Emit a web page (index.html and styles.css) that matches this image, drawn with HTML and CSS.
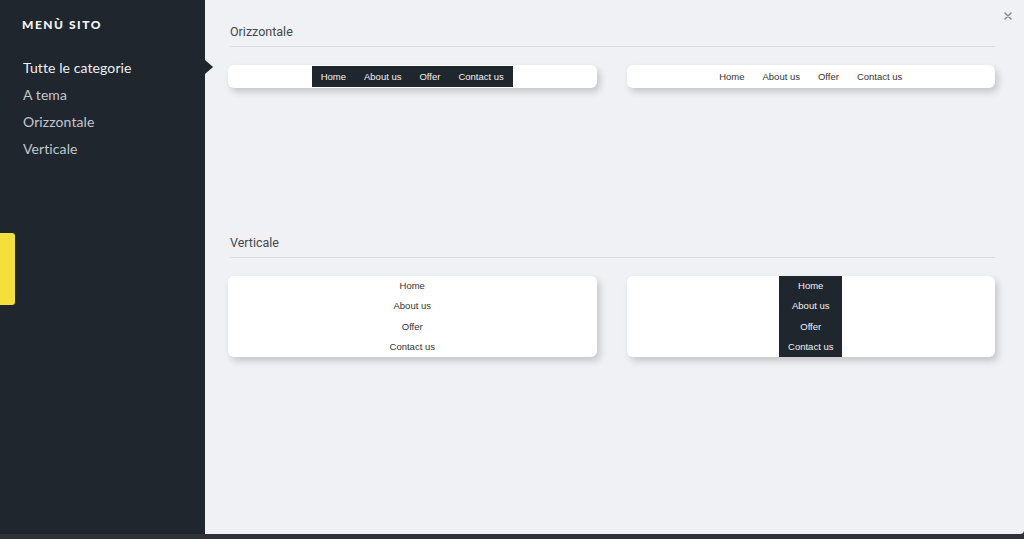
FILE: index.html
```html
<!DOCTYPE html>
<html lang="it">
<head>
    <meta charset="UTF-8">
    <meta name="viewport" content="width=device-width, initial-scale=1.0">
    <link rel="stylesheet" href="styles.css">
</head>
<body>
    <div class="app">
        <aside class="sidebar">
            <h1 class="sidebar-title">Menù sito</h1>
            <ul class="category-list">
                <li class="category-item active">Tutte le categorie</li>
                <li class="category-item">A tema</li>
                <li class="category-item">Orizzontale</li>
                <li class="category-item">Verticale</li>
            </ul>
            <div class="side-tab"></div>
        </aside>

        <main class="panel">
            <button class="close-button" aria-label="Chiudi">
                <svg width="8" height="8" viewBox="0 0 8 8">
                    <path d="M1 1L7 7M7 1L1 7" stroke="#7b858e" stroke-width="1.4" stroke-linecap="round"/>
                </svg>
            </button>

            <section class="menu-section">
                <h2 class="section-title">Orizzontale</h2>
                <div class="preview-grid">
                    <div class="preview-card">
                        <ul class="nav nav-horizontal nav-dark">
                            <li>Home</li>
                            <li>About us</li>
                            <li>Offer</li>
                            <li>Contact us</li>
                        </ul>
                    </div>
                    <div class="preview-card">
                        <ul class="nav nav-horizontal">
                            <li>Home</li>
                            <li>About us</li>
                            <li>Offer</li>
                            <li>Contact us</li>
                        </ul>
                    </div>
                </div>
            </section>

            <section class="menu-section">
                <h2 class="section-title">Verticale</h2>
                <div class="preview-grid">
                    <div class="preview-card">
                        <ul class="nav nav-vertical">
                            <li>Home</li>
                            <li>About us</li>
                            <li>Offer</li>
                            <li>Contact us</li>
                        </ul>
                    </div>
                    <div class="preview-card">
                        <ul class="nav nav-vertical nav-dark">
                            <li>Home</li>
                            <li>About us</li>
                            <li>Offer</li>
                            <li>Contact us</li>
                        </ul>
                    </div>
                </div>
            </section>
        </main>
    </div>
</body>
</html>
```

FILE: styles.css
```css
body {
    margin: 0;
    background-color: #2e3338;
    font-family: Roboto, "Liberation Sans", Arial, sans-serif;
}

.app {
    display: flex;
    height: 534px;
}

/* sidebar */
.sidebar {
    position: relative;
    z-index: 1;
    width: 205px;
    flex-shrink: 0;
    background-color: #20262e;
    padding: 17px 0 0 22px;
    box-sizing: border-box;
}

.sidebar-title {
    margin: 0 0 21px;
    font-family: Lato, "Open Sans", sans-serif;
    font-size: 12px;
    font-weight: 900;
    letter-spacing: 1.5px;
    text-transform: uppercase;
    color: #f3f4f6;
    line-height: 16px;
}

.category-list {
    list-style: none;
    margin: 0;
    padding: 0;
}

.category-item {
    position: relative;
    font-family: Lato, "Open Sans", sans-serif;
    font-size: 14px;
    letter-spacing: 0.1px;
    line-height: 27px;
    padding-left: 1px;
    color: #c3c7cd;
}

.category-item.active {
    color: #eef0f2;
}

.category-item.active::after {
    content: "";
    position: absolute;
    right: -8px;
    top: 6px;
    border-left: 8px solid #20262e;
    border-top: 7.5px solid transparent;
    border-bottom: 7.5px solid transparent;
}

.side-tab {
    position: absolute;
    left: 0;
    top: 233px;
    width: 15px;
    height: 72px;
    background-color: #f4df3b;
    border-radius: 0 3px 3px 0;
}

/* main panel */
.panel {
    position: relative;
    flex: 1;
    background-color: #eff1f4;
    padding: 22px 29px 0 23px;
    border-bottom-right-radius: 4px;
}

.close-button {
    position: absolute;
    top: 8px;
    right: 12px;
    border: none;
    background: none;
    padding: 0;
    width: 8px;
    height: 8px;
    cursor: pointer;
}

.menu-section {
    min-height: 211px;
}

.section-title {
    margin: 0 0 0 2px;
    padding-bottom: 4px;
    font-size: 12.5px;
    font-weight: 400;
    line-height: 20px;
    color: #45484d;
    border-bottom: 1px solid #dcdee2;
}

.preview-grid {
    display: grid;
    grid-template-columns: 1fr 1fr;
    gap: 30px;
    margin-top: 18px;
}

.preview-card {
    display: flex;
    justify-content: center;
    background-color: #fff;
    border-radius: 6px;
    box-shadow: 3px 4px 7px rgba(0, 0, 0, 0.18);
}

/* nav previews */
.nav {
    list-style: none;
    margin: 0;
    padding: 0;
    font-family: "Liberation Sans", Arial, sans-serif;
    font-size: 9.5px;
    letter-spacing: 0;
    color: #333;
}

.nav-horizontal {
    display: flex;
    margin: 1px 0;
}

.nav-horizontal li {
    padding: 0 9px;
    line-height: 21px;
}

.nav-vertical {
    display: flex;
    flex-direction: column;
    align-items: center;
}

.nav-vertical li {
    padding: 0 9px;
    line-height: 20.3px;
}

.nav-dark {
    background-color: #20262e;
    color: #f1f2f4;
}
```
